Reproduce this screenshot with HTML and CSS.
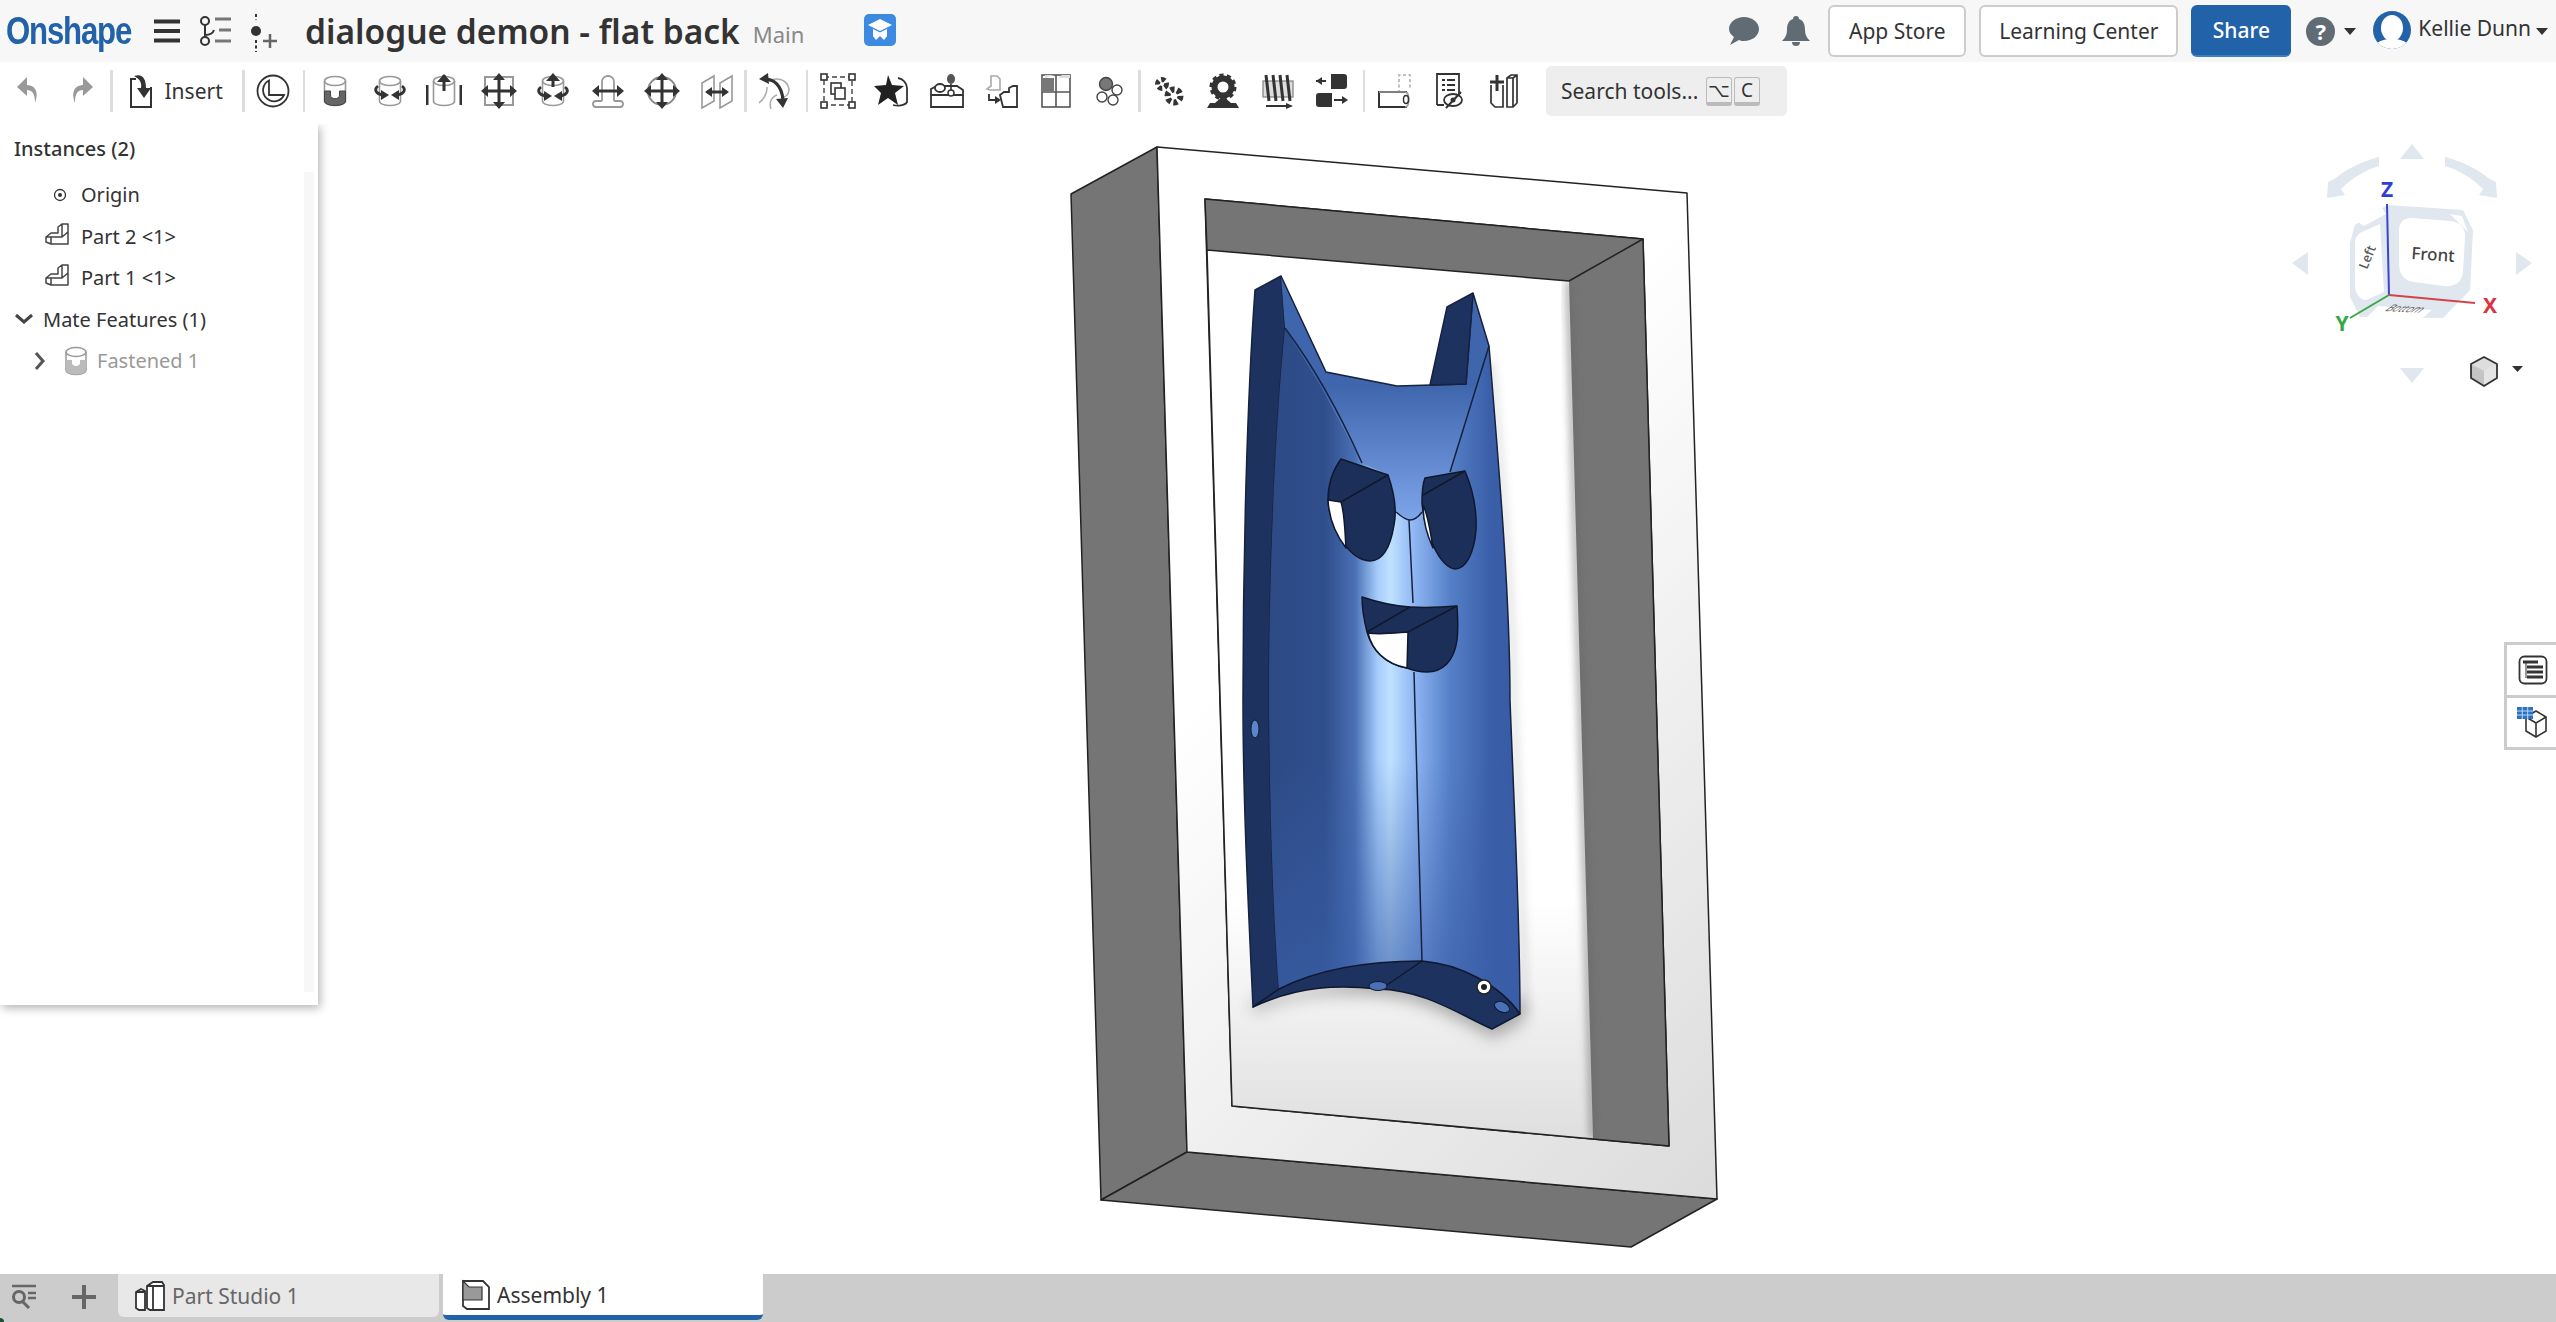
FILE: index.html
```html
<!DOCTYPE html>
<html lang="en">
<head>
<meta charset="utf-8">
<title>dialogue demon - flat back</title>
<link rel="stylesheet" href="styles.css">
</head>
<body>
<svg class="defs" width="0" height="0" aria-hidden="true">
  <defs>
    <symbol id="part" viewBox="0 0 24 24">
      <path d="M1 14l5-4h7V4l4-3h6v20H6l-5-2zM1 14h16V1M17 14l6-5M6 14v7" fill="none" stroke="#444" stroke-width="1.500" stroke-linejoin="round"/>
    </symbol>
    <symbol id="cyl" viewBox="0 0 36 36">
      <ellipse cx="18" cy="8" rx="10.500" ry="4.500" fill="none" stroke="#999" stroke-width="1.600"/>
      <path d="M7.500 8v20c0 6 21 6 21 0V8" fill="none" stroke="#999" stroke-width="1.600"/>
    </symbol>
  </defs>
</svg>

<header class="topbar">
  <div class="logo"><span class="logo-text">Onshape</span></div>
  <svg class="ic-burger" width="28" height="24" viewBox="0 0 28 24"><path d="M1 2.500h26M1 12h26M1 21.500h26" stroke="#333" stroke-width="4"/></svg>
  <svg class="ic-branch" width="34" height="32" viewBox="0 0 34 32"><circle cx="6" cy="6" r="4" fill="none" stroke="#333" stroke-width="2"/><circle cx="6" cy="26" r="4" fill="none" stroke="#333" stroke-width="2"/><path d="M6 10v12M6 20c5 0 8-2 9-5" fill="none" stroke="#333" stroke-width="2"/><path d="M16 4h16M20 15h12M16 26h16" stroke="#777" stroke-width="3"/></svg>
  <svg class="ic-insert" width="28" height="38" viewBox="0 0 28 38"><path d="M7 0v6M7 26v12" stroke="#333" stroke-width="2" stroke-dasharray="3 2.500"/><circle cx="7" cy="17" r="5" fill="#333"/><path d="M21 20v14M14 27h14" stroke="#666" stroke-width="2.500"/></svg>
  <h1 class="doc-title">dialogue demon - flat back</h1>
  <span class="doc-branch">Main</span>
  <svg class="ic-learn" width="32" height="32" viewBox="0 0 32 32"><rect width="32" height="32" rx="5" fill="#3d8be0"/><path d="M16 5L4 11l12 6 12-6z" fill="#fff"/><path d="M9 15v7l3 4 4-4 4 4 3-4v-7l-7 3.500z" fill="#fff"/></svg>
  <div class="top-right">
    <svg width="30" height="28" viewBox="0 0 30 28"><path d="M15 0c8 0 15 5 15 12s-7 12-15 12c-2 0-3 0-5-1L1 28l4-8C2 18 0 15 0 12 0 5 7 0 15 0z" fill="#616b74"/></svg>
    <svg class="ic-bell" width="28" height="30" viewBox="0 0 28 30"><path d="M14 0c2 0 3 1 3 3 5 2 6 6 6 11 0 5 2 8 5 11H0c3-3 5-6 5-11 0-5 1-9 6-11 0-2 1-3 3-3zM10 26h8c0 3-2 4-4 4s-4-1-4-4z" fill="#616b74"/></svg>
    <button class="btn btn-store">App Store</button>
    <button class="btn btn-learn">Learning Center</button>
    <button class="btn-share">Share</button>
    <span class="ic-help">?</span>
    <span class="caret caret-help"></span>
    <svg class="avatar" width="40" height="40" viewBox="0 0 40 40"><defs><clipPath id="av"><circle cx="20" cy="19" r="19"/></clipPath></defs><circle cx="20" cy="19" r="19" fill="#2262a8"/><g clip-path="url(#av)"><ellipse cx="20" cy="17" rx="11" ry="13" fill="#fff"/><path d="M2 40c0-9 8-12 18-12s18 3 18 12z" fill="#fff"/></g></svg>
    <span class="user">Kellie Dunn</span>
    <span class="caret caret-user"></span>
  </div>
</header>

<nav class="toolbar">
  <div class="tool"><svg width="24" height="32" viewBox="0 0 24 32"><path d="M11 2L1 12l10 9v-6c5 0 8 3 8 13 3-8 3-17-8-18z" fill="#999"/></svg></div>
  <div class="tool"><svg width="24" height="32" viewBox="0 0 24 32"><path d="M13 2l10 10-10 9v-6c-5 0-8 3-8 13-3-8-3-17 8-18z" fill="#999"/></svg></div>
  <div class="sep"></div>
  <div class="insert">
    <svg width="26" height="36" viewBox="0 0 26 36"><path d="M8 6H3v28h20V14" fill="none" stroke="#333" stroke-width="2"/><path d="M6 3c8-3 12 2 12 12h5l-7 10-7-10h4c1-5-1-9-7-12z" fill="#333"/></svg>
    <span class="insert-label">Insert</span>
  </div>
  <div class="sep"></div>
  <div class="tool"><svg width="34" height="34" viewBox="0 0 34 34"><circle cx="17" cy="17" r="15.500" fill="none" stroke="#333" stroke-width="1.800"/><path d="M13 6.500A11 11 0 1 0 28 21H13z" fill="none" stroke="#333" stroke-width="1.800"/></svg></div>
  <div class="sep sep-thin"></div>

  <div class="tool"><svg width="36" height="36" viewBox="0 0 36 36"><use href="#cyl"/><path d="M7.500 18h6v4c0 5 9 5 9 0v-4h6v10c0 6-21 6-21 0z" fill="#666" stroke="#444"/></svg></div>
  <div class="tool"><svg width="36" height="36" viewBox="0 0 36 36"><use href="#cyl"/><path d="M6 13c-4 3-3 7 4 9" fill="none" stroke="#333" stroke-width="2.800"/><path d="M9 17l8 5-8 5z" fill="#333"/><path d="M30 13c4 3 3 7-4 9" fill="none" stroke="#333" stroke-width="2.800"/><path d="M27 17l-8 5 8 5z" fill="#333"/></svg></div>
  <div class="tool"><svg width="36" height="36" viewBox="0 0 36 36"><use href="#cyl"/><path d="M1 12v20M35 12v20" stroke="#333" stroke-width="3"/><path d="M18 2v16" stroke="#333" stroke-width="3"/><path d="M18 1l7 8H11z" fill="#333"/></svg></div>
  <div class="tool"><svg width="36" height="36" viewBox="0 0 36 36"><rect x="4" y="4" width="28" height="28" fill="none" stroke="#999" stroke-width="2"/><path d="M18 4v28M4 18h28" stroke="#333" stroke-width="3"/><path d="M18 0l6 7H12zM18 36l6-7H12zM0 18l7-6v12zM36 18l-7-6v12z" fill="#333"/></svg></div>
  <div class="tool"><svg width="36" height="36" viewBox="0 0 36 36"><use href="#cyl"/><path d="M18 2v12" stroke="#333" stroke-width="3"/><path d="M18 0l7 8H11z" fill="#333"/><path d="M6 14c-4 3-3 7 4 9" fill="none" stroke="#333" stroke-width="2.800"/><path d="M9 18l8 5-8 5z" fill="#333"/><path d="M30 14c4 3 3 7-4 9" fill="none" stroke="#333" stroke-width="2.800"/><path d="M27 18l-8 5 8 5z" fill="#333"/></svg></div>
  <div class="tool"><svg width="36" height="36" viewBox="0 0 36 36"><path d="M12 28V9c0-8 12-8 12 0v19M12 28H6c-4 0-4 6 0 6h24c4 0 4-6 0-6h-6M6 34h24" fill="none" stroke="#999" stroke-width="1.800"/><path d="M4 18h28" stroke="#333" stroke-width="3"/><path d="M2 18l7-6v12zM34 18l-7-6v12z" fill="#333"/></svg></div>
  <div class="tool"><svg width="36" height="36" viewBox="0 0 36 36"><circle cx="18" cy="18" r="14" fill="none" stroke="#888" stroke-width="2"/><path d="M18 4v28M4 18h28" stroke="#333" stroke-width="3"/><path d="M18 0l6 7H12zM18 36l6-7H12zM0 18l7-6v12zM36 18l-7-6v12z" fill="#333"/></svg></div>
  <div class="tool"><svg width="36" height="36" viewBox="0 0 36 36"><path d="M3 10l12-7v25L3 35zM33 3L21 10v25l12-7z" fill="none" stroke="#999" stroke-width="1.600"/><path d="M8 19h20" stroke="#333" stroke-width="3"/><path d="M6 19l7-5v10zM30 19l-7-5v10z" fill="#333"/></svg></div>
  <div class="sep"></div>
  <div class="tool"><svg width="36" height="36" viewBox="0 0 36 36"><path d="M2 30c5-4 8-9 8-16M14 36c-2-6 0-12 6-14M12 8c8-4 18-2 20 8 0 5-3 8-6 8" fill="none" stroke="#aaa" stroke-width="1.500"/><path d="M7 6c10 0 17 6 19 20" fill="none" stroke="#333" stroke-width="3.200"/><path d="M2 6l9-6 1 11zM26 35l-7-9 12-1z" fill="#333"/></svg></div>
  <div class="sep sep-thin"></div>

  <div class="tool"><svg width="36" height="36" viewBox="0 0 36 36"><rect x="4" y="4" width="28" height="28" fill="none" stroke="#444" stroke-width="1.400" stroke-dasharray="5 3"/><g fill="#fff" stroke="#333" stroke-width="1.600"><rect x="1" y="1" width="6" height="6"/><rect x="29" y="1" width="6" height="6"/><rect x="1" y="29" width="6" height="6"/><rect x="29" y="29" width="6" height="6"/><rect x="11" y="10" width="10" height="11"/><rect x="15" y="15" width="10" height="11"/></g></svg></div>
  <div class="tool"><svg width="36" height="36" viewBox="0 0 36 36"><path d="M24 5a11 11 0 0 1 9 10v14c-2 4-10 4-14 3" fill="none" stroke="#333" stroke-width="1.800"/><path d="M14 2l4 10 12 1-9 7 3 12-10-7-10 7 3-12-7-7 12-1z" fill="#222"/></svg></div>
  <div class="tool"><svg width="36" height="36" viewBox="0 0 36 36"><path d="M2 16l6-3h20l6 4v17H2zM2 22h32" fill="none" stroke="#333" stroke-width="1.800"/><ellipse cx="11" cy="15" rx="5" ry="4" fill="#fff" stroke="#333" stroke-width="1.800"/><ellipse cx="22" cy="6" rx="4" ry="5" fill="#555"/><path d="M22 11v10" stroke="#333" stroke-width="1.600"/><circle cx="22" cy="20" r="3" fill="#fff" stroke="#333" stroke-width="1.500"/></svg></div>
  <div class="tool"><svg width="36" height="36" viewBox="0 0 36 36"><path d="M4 16l4-3V3h6l3 3v11H7z" fill="#fff" stroke="#aaa" stroke-width="1.600"/><path d="M17 22l4-3h5v-4l4-2h4v21H20z" fill="#fff" stroke="#333" stroke-width="1.800"/><path d="M6 21v6h8" fill="none" stroke="#333" stroke-width="1.800"/><path d="M18 27l-6-4v8z" fill="#333"/></svg></div>
  <div class="tool"><svg width="30" height="34" viewBox="0 0 30 34"><rect x="1" y="1" width="28" height="32" fill="#fff" stroke="#555" stroke-width="1.600"/><path d="M1 18h28M15 1v32" stroke="#555" stroke-width="1.600"/><path d="M1 4h12v14H1z" fill="#777"/><path d="M4 1h9l-9 3zM17 4l4-3h8v3" fill="#ddd"/></svg></div>
  <div class="tool"><svg width="30" height="30" viewBox="0 0 30 30"><circle cx="11" cy="8" r="6.500" fill="#777" stroke="#444" stroke-width="1.400"/><circle cx="22" cy="14" r="5" fill="#fff" stroke="#444" stroke-width="1.400"/><circle cx="7" cy="21" r="5" fill="#fff" stroke="#444" stroke-width="1.400"/><circle cx="18" cy="24" r="5" fill="#fff" stroke="#444" stroke-width="1.400"/></svg></div>
  <div class="sep"></div>
  <div class="tool"><svg width="36" height="36" viewBox="0 0 36 36"><g fill="none" stroke="#333" stroke-dasharray="4 2.600"><circle cx="11" cy="11" r="4.500" stroke-width="5"/><circle cx="23" cy="23" r="6.500" stroke-width="6"/></g></svg></div>
  <div class="tool"><svg width="36" height="36" viewBox="0 0 36 36"><circle cx="18" cy="14" r="8.500" fill="none" stroke="#333" stroke-width="6"/><circle cx="18" cy="14" r="11.500" fill="none" stroke="#333" stroke-width="4" stroke-dasharray="4 3.200"/><path d="M2 35l3-5h26l3 5zM10 30l8-7 8 7z" fill="#333"/></svg></div>
  <div class="tool"><svg width="36" height="36" viewBox="0 0 36 36"><rect x="3" y="8" width="30" height="16" fill="#ddd" stroke="#888" stroke-width="1.300"/><path d="M6 2l3 26M13 2l3 26M20 2l3 26M27 2l3 26" stroke="#333" stroke-width="3"/><path d="M6 33h22" stroke="#333" stroke-width="2"/><path d="M33 33l-7-3v6z" fill="#333"/></svg></div>
  <div class="tool"><svg width="36" height="36" viewBox="0 0 36 36"><path d="M17 1h13c2 0 3 1 3 3v9c0 2-1 3-3 3H17z" fill="#333"/><path d="M2 8h10" stroke="#333" stroke-width="2"/><path d="M2 8l6-4v8z" fill="#333"/><path d="M5 20h13v14H5c-2 0-3-1-3-3v-8c0-2 1-3 3-3z" fill="#333"/><path d="M20 27h12" stroke="#333" stroke-width="2"/><path d="M34 27l-6-4v8z" fill="#333"/></svg></div>
  <div class="sep sep-thin"></div>
  <div class="tool"><svg width="36" height="36" viewBox="0 0 36 36"><path d="M22 20V2h11v14" fill="none" stroke="#aaa" stroke-width="1.500" stroke-dasharray="3 2.500"/><path d="M30 34H2V19h28" fill="none" stroke="#333" stroke-width="2"/><path d="M2 19h26c5 0 5 15 0 15" fill="none" stroke="#999" stroke-width="1.600"/><ellipse cx="29" cy="26.500" rx="2.500" ry="4" fill="none" stroke="#333" stroke-width="1.500"/></svg></div>
  <div class="tool"><svg width="32" height="36" viewBox="0 0 32 36"><path d="M4 32V1h22v20M4 32h7" fill="none" stroke="#333" stroke-width="1.800"/><path d="M9 7h3M14 7h8M9 12h3M14 12h8M9 17h3M14 17h8" stroke="#333" stroke-width="1.800"/><ellipse cx="20" cy="27" rx="9" ry="6" fill="#fff" stroke="#333" stroke-width="1.800"/><circle cx="20" cy="27" r="2.500" fill="#333"/><path d="M13 35L28 19" stroke="#333" stroke-width="2"/></svg></div>
  <div class="tool"><svg width="30" height="36" viewBox="0 0 30 36"><path d="M18 5l4-3h6v28l-4 4h-6zM18 5h6v29M24 5l4-3" fill="#fff" stroke="#333" stroke-width="1.700"/><path d="M2 12v18l4 4h8V12" fill="none" stroke="#333" stroke-width="1.700"/><path d="M8 2v16M1 9h14" stroke="#333" stroke-width="3"/></svg></div>
  <div class="search">
    <span class="search-label">Search tools...</span>
    <kbd class="key">⌥</kbd>
    <kbd class="key">C</kbd>
  </div>
</nav>

<main class="viewport">
  <svg class="scene" width="2556" height="1150" viewBox="0 124 2556 1150">
    <defs>
      <linearGradient id="ring" gradientUnits="userSpaceOnUse" x1="1200" y1="700" x2="1700" y2="1200"><stop offset="0" stop-color="#fff"/><stop offset="1" stop-color="#dcdcdc"/></linearGradient>
      <linearGradient id="plate" gradientUnits="userSpaceOnUse" x1="0" y1="900" x2="0" y2="1130"><stop offset="0" stop-color="#fff"/><stop offset="1" stop-color="#e0e0e0"/></linearGradient>
      <linearGradient id="face" gradientUnits="userSpaceOnUse" x1="1270" y1="0" x2="1520" y2="0">
        <stop offset="0" stop-color="#2d4a85"/><stop offset=".22" stop-color="#2f4e8c"/><stop offset=".34" stop-color="#4a70b5"/><stop offset=".43" stop-color="#a5cbfb"/><stop offset=".48" stop-color="#bfe2ff"/><stop offset=".58" stop-color="#8eb5f3"/><stop offset=".72" stop-color="#5580c8"/><stop offset=".88" stop-color="#3a5fa8"/><stop offset="1" stop-color="#375aa3"/>
      </linearGradient>
      <linearGradient id="vee" gradientUnits="userSpaceOnUse" x1="0" y1="385" x2="0" y2="520"><stop offset="0" stop-color="#3f66ad"/><stop offset="1" stop-color="#7ea5ea"/></linearGradient>
      <linearGradient id="faceBot" gradientUnits="userSpaceOnUse" x1="0" y1="760" x2="0" y2="980"><stop offset="0" stop-color="#3a5fa8" stop-opacity="0"/><stop offset="1" stop-color="#3a5fa8" stop-opacity=".65"/></linearGradient>
      <filter id="blur8" x="-30%" y="-30%" width="160%" height="160%"><feGaussianBlur stdDeviation="8"/></filter>
      <filter id="blur4" x="-30%" y="-30%" width="160%" height="160%"><feGaussianBlur stdDeviation="4"/></filter>
      <clipPath id="plateClip"><path d="M1207 250L1569 281 1593 1139 1232 1106z"/></clipPath>
      <clipPath id="wallClip"><path d="M1207 250L1569 281 1643 239 1669 1146 1593 1139 1232 1106z"/></clipPath>
      <clipPath id="faceClip"><path d="M1281 276L1326 372 1397 386 1466 384 1473 293 1489 346C1500 480 1510 600 1510 700C1515 830 1520 920 1520 1014C1500 985 1460 964 1422 961C1370 961 1320 968 1279 989C1274 920 1270 830 1269 700C1269 560 1276 420 1285 328z"/></clipPath>
    </defs>

    <g stroke="#222" stroke-width="1.500" stroke-linejoin="round">
      <path d="M1071 194L1157 147 1187 1152 1101 1200z" fill="#757575"/>
      <path d="M1101 1200L1187 1152 1717 1199 1631 1247z" fill="#757575"/>
      <path d="M1157 147L1687 193 1717 1199 1187 1152zM1205 199L1643 239 1669 1146 1232 1106z" fill="url(#ring)" fill-rule="evenodd"/>
      <path d="M1207 250L1569 281 1593 1139 1232 1106z" fill="url(#plate)" stroke="none"/>
      <path d="M1205 199L1643 239 1569 281 1207 250z" fill="#757575" stroke="none"/>
      <path d="M1643 239L1569 281 1593 1139 1669 1146z" fill="#757575" stroke="none"/>
    </g>
    <g clip-path="url(#wallClip)">
      <path d="M1569 281L1593 1139" stroke="#666" stroke-width="4" filter="url(#blur4)"/>
    </g>
    <g clip-path="url(#plateClip)">
      <path d="M1253 1012C1300 992 1340 994 1378 996C1425 998 1460 1022 1494 1038L1524 1022L1524 1000L1378 975L1253 1000z" fill="#555" opacity=".45" filter="url(#blur8)"/>
      <path d="M1492 360C1504 500 1514 620 1514 700C1519 830 1524 920 1525 1014" fill="none" stroke="#999" stroke-width="4" opacity=".45" filter="url(#blur4)"/>
    </g>
    <path d="M1205 199L1643 239 1569 281 1207 250zM1207 250L1232 1106 1593 1139 1669 1146 1643 239" fill="none" stroke="#222" stroke-width="1.500" stroke-linejoin="round"/>

    <path d="M1255 290L1281 276 1285 328C1276 420 1269 560 1269 700C1270 830 1274 920 1279 989L1253 1007C1248 900 1243 800 1243 700C1243 560 1247 400 1255 290z" fill="#1e3260" stroke="#16223f" stroke-width="1.500" stroke-linejoin="round"/>
    <g clip-path="url(#faceClip)">
      <rect x="1260" y="270" width="270" height="760" fill="url(#face)"/>
      <path d="M1281 276L1326 372 1397 386 1466 384 1473 293 1489 346 1450 472 1425 478 1422 512 1410 520 1396 512 1388 475 1362 463 1320 385 1285 328z" fill="url(#vee)"/>
      <rect x="1260" y="760" width="270" height="270" fill="url(#faceBot)"/>
    </g>
    <g fill="none" stroke="#16223f" stroke-width="1.500">
      <path d="M1281 276L1326 372 1397 386 1466 384 1473 293 1489 346C1500 480 1510 600 1510 700C1515 830 1520 920 1520 1014"/>
      <path d="M1285 328C1320 375 1345 425 1362 463"/>
      <path d="M1489 346L1450 472"/>
      <path d="M1396 512C1403 518 1407 520 1410 520C1414 520 1419 516 1422 512"/>
      <path d="M1409 520L1413 603"/>
      <path d="M1414 672L1422 961"/>
    </g>
    <path d="M1447 307L1473 293 1466 384 1430 385z" fill="#1e3260" stroke="#16223f" stroke-width="1.500" stroke-linejoin="round"/>

    <g stroke="#10182e" stroke-width="1.500" stroke-linejoin="round">
      <path d="M1341 459L1388 475C1395 495 1397 510 1394 525C1390 550 1382 561 1370 561C1350 560 1330 530 1328 500C1328 485 1333 470 1341 459z" fill="#1c2f58"/>
      <path d="M1328 500L1341 502C1345 515 1345 535 1346 548C1336 535 1329 518 1328 500z" fill="#fff"/>
      <path d="M1341 502L1388 475" fill="none"/>
      <path d="M1425 478L1465 471C1473 490 1477 510 1476 530C1474 555 1465 569 1455 569C1440 567 1425 535 1422 503C1422 495 1422 485 1425 478z" fill="#1c2f58"/>
      <path d="M1423 505C1428 515 1431 535 1433 548C1427 535 1423 520 1423 505z" fill="#fff"/>
      <path d="M1423 495L1465 471" fill="none"/>
      <path d="M1362 597C1380 603 1395 606 1410 607C1430 608 1445 607 1457 606C1458 620 1458 632 1457 640C1454 662 1442 672 1427 672C1420 672 1412 670 1407 668C1385 664 1372 650 1367 632C1364 620 1362 608 1362 597z" fill="#1c2f58"/>
      <path d="M1368 633C1380 635 1395 633 1408 632L1407 668C1385 664 1372 650 1368 633z" fill="#fff"/>
      <path d="M1367 632L1410 607M1408 632L1457 606" fill="none"/>
    </g>

    <path d="M1279 989C1320 968 1370 961 1422 961C1460 964 1500 985 1520 1014L1492 1029C1460 1015 1425 990 1378 989C1340 985 1300 985 1253 1007z" fill="#1e3260" stroke="#10182e" stroke-width="1.500" stroke-linejoin="round"/>
    <path d="M1422 961L1384 987" stroke="#10182e" stroke-width="1.500"/>
    <ellipse cx="1378" cy="986" rx="9" ry="4.500" fill="#4a70b5" stroke="#10182e"/>
    <ellipse cx="1502" cy="1007" rx="8" ry="5" transform="rotate(25 1502 1007)" fill="#4a70b5" stroke="#10182e"/>
    <ellipse cx="1255" cy="729" rx="4" ry="9" fill="#5d85cc" stroke="#10182e"/>
    <circle cx="1484" cy="987" r="7" fill="#fff" stroke="#222" stroke-width="1.500"/>
    <circle cx="1484" cy="987" r="3" fill="#222"/>
  </svg>

  <aside class="panel">
    <div class="scroll-track"></div>
    <h2 class="panel-title">Instances (2)</h2>
    <ul class="tree">
      <li class="row row-child"><svg class="row-ic" width="14" height="14" viewBox="0 0 14 14"><circle cx="7" cy="7" r="5.500" fill="none" stroke="#333" stroke-width="1.300"/><circle cx="7" cy="7" r="2" fill="#333"/></svg><span>Origin</span></li>
      <li class="row row-child"><svg class="row-part" width="24" height="24"><use href="#part"/></svg><span>Part 2 &lt;1&gt;</span></li>
      <li class="row row-child"><svg class="row-part" width="24" height="24"><use href="#part"/></svg><span>Part 1 &lt;1&gt;</span></li>
      <li class="row row-group"><svg class="chev" width="20" height="12" viewBox="0 0 20 12"><path d="M2 2l8 7 8-7" fill="none" stroke="#444" stroke-width="3"/></svg><span>Mate Features (1)</span></li>
      <li class="row row-mate"><svg class="chev-r" width="12" height="20" viewBox="0 0 12 20"><path d="M2 2l7 8-7 8" fill="none" stroke="#555" stroke-width="3"/></svg><svg class="mate-ic" width="24" height="30" viewBox="0 0 24 30"><ellipse cx="12" cy="6" rx="10" ry="4.500" fill="none" stroke="#999" stroke-width="1.500"/><path d="M2 6v18c0 6 20 6 20 0V6" fill="none" stroke="#999" stroke-width="1.500"/><path d="M2 14h6v3c0 4 8 4 8 0v-3h6v10c0 6-20 6-20 0z" fill="#bbb"/></svg><span>Fastened 1</span></li>
    </ul>
  </aside>

  <svg class="gizmo" width="296" height="270" viewBox="2260 130 296 270">
    <g fill="#e1e7ee">
      <path d="M2412 144l12 15h-24zM2412 383l-12-15h24zM2292 263l16-11v23zM2532 263l-16-11v23z"/>
      <path d="M2379 157C2360 162 2345 170 2336 178L2328 182 2327 198 2345 195 2341 189C2352 178 2365 170 2379 166z"/>
      <path d="M2445 157C2464 162 2479 170 2488 178L2496 182 2497 198 2479 195 2483 189C2472 178 2459 170 2445 166z"/>
      <path d="M2355 225L2387 205 2463 210 2473 230 2470 290 2443 318 2360 317 2350 297 2350 243z"/>
    </g>
    <g fill="#fff">
      <path d="M2412 218L2450 221C2460 222 2466 228 2465 238L2463 272C2462 283 2454 287 2444 286L2414 282C2404 281 2399 274 2399 264V232C2399 222 2403 218 2412 218z"/>
      <path d="M2362 232L2380 224 2384 292 2366 300C2359 300 2355 292 2355 285V243C2355 237 2358 234 2362 232z"/>
      <path d="M2378 306L2432 310 2420 320 2366 318z"/>
      <path d="M2358 222L2382 208 2386 214 2364 226zM2450 214L2468 232 2462 216z"/>
    </g>
    <text class="giz-front" transform="translate(2411 259) rotate(4)">Front</text>
    <text class="giz-left" transform="translate(2367 270) rotate(-68)">Left</text>
    <text class="giz-bottom" transform="translate(2384 311) rotate(3) skewX(-50)">Bottom</text>
    <path d="M2389 295L2387 204" stroke="#3a44cf" stroke-width="2"/>
    <path d="M2389 295L2475 303" stroke="#d0454b" stroke-width="2"/>
    <path d="M2389 295L2350 318" stroke="#3aa845" stroke-width="2"/>
    <text class="axis axis-z" x="2387" y="197">Z</text>
    <text class="axis axis-x" x="2490" y="313">X</text>
    <text class="axis axis-y" x="2342" y="331">Y</text>
    <path d="M2471 364l13-7 13 7v14l-13 8-13-8z" fill="#ddd"/>
    <path d="M2471 364l13 7v15l-13-8z" fill="#c4c4c4"/>
    <path d="M2484 371l13-7v14l-13 8z" fill="#e4e4e4"/>
    <path d="M2471 364l13-7 13 7v14l-13 8-13-8z" fill="none" stroke="#333" stroke-width="1.800" stroke-linejoin="round"/>
    <path d="M2512 366h11l-5.500 6z" fill="#333"/>
  </svg>

  <div class="side-tabs">
    <div class="side-tab"><svg width="30" height="30" viewBox="0 0 30 30"><rect x="1.500" y="1.500" width="27" height="27" rx="5" fill="none" stroke="#333" stroke-width="1.800"/><path d="M5 7h15M9 12h16M9 17h16M9 22h16" stroke="#333" stroke-width="3"/><path d="M8 8v15" stroke="#333"/></svg></div>
    <div class="side-tab"><svg width="32" height="32" viewBox="0 0 32 32"><path d="M20 6l10 6v14l-10 6-10-6V12z" transform="translate(-1 -2)" fill="none" stroke="#333" stroke-width="1.600" stroke-linejoin="round"/><path d="M9 10l10 6 10-6M19 16v14" fill="none" stroke="#333" stroke-width="1.600"/><rect x="0" y="0" width="16" height="12" fill="#2a72c4"/><path d="M0 4h16M0 8h16M5.300 0v12M10.700 0v12" stroke="#bcd7f3" stroke-width="1"/></svg></div>
  </div>
</main>

<footer class="tabbar">
  <span class="corner"></span>
  <svg class="ic-filter" width="28" height="26" viewBox="0 0 28 26"><path d="M2 2h24" stroke="#666" stroke-width="2.500"/><circle cx="9" cy="13" r="5.500" fill="none" stroke="#666" stroke-width="3"/><path d="M13 18l6 6" stroke="#666" stroke-width="3"/><path d="M18 9h8M18 14h8" stroke="#666" stroke-width="2.500"/></svg>
  <svg class="ic-plus" width="24" height="24" viewBox="0 0 24 24"><path d="M12 0v24M0 12h24" stroke="#666" stroke-width="4"/></svg>
  <div class="tab tab-studio">
    <svg width="32" height="32" viewBox="0 0 32 32"><path d="M2 12l5-3 4 2v19H5l-3-2zM2 12h9M13 6l6-4h9l2 3v25H16l-3-2zM13 6h6M19 6v24M19 6h11" fill="#fff" stroke="#333" stroke-width="1.800"/></svg>
    <span>Part Studio 1</span>
  </div>
  <div class="tab tab-assembly">
    <svg width="30" height="32" viewBox="0 0 30 32"><path d="M2 2h20l6 6v22H6l-4-3z" fill="#fff" stroke="#333" stroke-width="1.800"/><path d="M2 2v19h19V8H8z" fill="#999" stroke="#333" stroke-width="1.200"/></svg>
    <span>Assembly 1</span>
  </div>
</footer>
</body>
</html>
```

FILE: styles.css
```css
* { box-sizing: border-box; }
html, body { margin: 0; padding: 0; }
body {
  width: 2556px;
  height: 1322px;
  overflow: hidden;
  display: flex;
  flex-direction: column;
  font-family: "Noto Sans", "Open Sans", sans-serif;
  color: #333;
  background: #fff;
}
.defs { position: absolute; }
svg { display: block; flex: none; }

/* top bar */
.topbar {
  height: 62px;
  flex: none;
  display: flex;
  align-items: center;
  background: #f7f7f7;
  padding-left: 6px;
}
.logo { width: 147px; overflow: visible; }
.logo-text {
  display: inline-block;
  font: 700 39px "Liberation Sans", sans-serif;
  color: #2262a8;
  letter-spacing: -1.500px;
  transform: scaleX(.8);
  transform-origin: left center;
}
.ic-branch { margin-left: 18px; }
.ic-insert { margin-left: 16px; margin-top: 4px; }
.doc-title { margin: 0 0 0 28px; font-size: 33.500px; font-weight: 600; color: #333; white-space: nowrap; }
.doc-branch { margin-left: 13px; font-size: 22px; color: #888; padding-top: 5px; }
.ic-learn { margin-left: 60px; margin-top: -2px; }
.top-right { margin-left: auto; display: flex; align-items: center; height: 100%; padding-right: 8px; }
.ic-bell { margin-left: 23px; }
.btn {
  height: 52px;
  margin-left: 18px;
  background: #fff;
  border: 2px solid #ccc;
  border-radius: 6px;
  font: 400 21px "Noto Sans", sans-serif;
  color: #333;
  padding: 0;
}
.btn-store { width: 138px; }
.btn-learn { width: 199px; margin-left: 13px; }
.btn-share {
  width: 100px;
  height: 52px;
  margin-left: 13px;
  background: #2262a8;
  border: 0;
  border-bottom: 2px solid #3d7fc4;
  border-radius: 6px;
  font: 500 21px "Noto Sans", sans-serif;
  color: #fff;
}
.ic-help {
  margin-left: 15px;
  width: 29px;
  height: 29px;
  border-radius: 50%;
  background: #616b74;
  color: #fff;
  font-size: 22px;
  line-height: 29px;
  font-weight: 700;
  text-align: center;
  flex: none;
}
.caret { width: 0; height: 0; border-left: 6px solid transparent; border-right: 6px solid transparent; border-top: 7px solid #333; flex: none; }
.caret-help { margin-left: 9px; }
.avatar { margin-left: 16px; }
.user { margin-left: 6px; font-size: 21px; color: #333; padding-bottom: 6px; white-space: nowrap; }
.caret-user { margin-left: 5px; }

/* toolbar */
.toolbar { height: 62px; flex: none; display: flex; align-items: center; background: #fff; padding-bottom: 4px; }
.tool { width: 54.500px; height: 42px; display: flex; align-items: center; justify-content: center; flex: none; }
.sep { width: 3px; height: 42px; background: #ddd; flex: none; margin-right: 1px; }
.sep-thin { width: 2px; margin: 0 3px; }
.toolbar > .tool:first-child { width: 55px; }
.insert { width: 128px; display: flex; align-items: center; padding-left: 14px; gap: 11px; flex: none; }
.insert-label { font-size: 21px; color: #333; }
.search {
  margin-left: 15px;
  width: 241px;
  height: 50px;
  background: #eee;
  border-radius: 5px;
  display: flex;
  align-items: center;
  padding-left: 15px;
  flex: none;
}
.search-label { font-size: 21px; color: #333; width: 145px; white-space: nowrap; }
.key {
  width: 26px;
  height: 29px;
  margin-right: 2px;
  background: #eee;
  border: 1px solid #bbb;
  border-bottom: 4px solid #bbb;
  border-radius: 3px;
  font: 400 19px "Noto Sans", "DejaVu Sans", sans-serif;
  display: flex;
  align-items: center;
  justify-content: center;
}

/* viewport */
.viewport { flex: 1; position: relative; overflow: hidden; background: #fff; }
.scene { position: absolute; left: 0; top: 0; }
.panel {
  position: absolute;
  left: 0;
  top: 0;
  width: 318px;
  height: 881px;
  background: #fff;
  box-shadow: 2px 3px 9px rgba(0,0,0,.3);
  padding: 10px 0 0 14px;
}
.scroll-track { position: absolute; left: 304px; top: 48px; width: 10px; height: 820px; background: #f7f7f7; }
.panel-title { margin: 0 0 10px; height: 30px; line-height: 30px; font-size: 20px; font-weight: 500; color: #333; }
.tree { list-style: none; margin: 0; padding: 0; }
.row { height: 41.500px; display: flex; align-items: center; font-size: 20px; color: #333; white-space: nowrap; }
.row-child { position: relative; padding-left: 67px; }
.row-ic { position: absolute; left: 39px; top: 14px; }
.row-part { position: absolute; left: 31px; top: 7px; }
.chev { margin-right: 9px; }
.row-mate { color: #999; padding-left: 20px; }
.mate-ic { margin-left: 18px; margin-right: 9px; }

.gizmo { position: absolute; left: 2260px; top: 6px; }
.giz-front { font: 500 17px "Noto Sans", sans-serif; fill: #444; }
.giz-left { font: 500 13px "Noto Sans", sans-serif; fill: #555; }
.giz-bottom { font: 400 10px "Noto Sans", sans-serif; fill: #666; }
.axis { font: 700 21px "Noto Sans", sans-serif; text-anchor: middle; }
.axis-z { fill: #2f3fd6; }
.axis-x { fill: #d93540; }
.axis-y { fill: #35a843; }

.side-tabs {
  position: absolute;
  right: 0;
  top: 518px;
  width: 52px;
  border: 3px solid #ccc;
  border-right: 0;
  background: #fff;
}
.side-tab { height: 50px; display: flex; align-items: center; justify-content: center; padding-left: 3px; }
.side-tab + .side-tab { border-top: 3px solid #ccc; height: 52px; }

/* tabs */
.tabbar { position: relative; height: 48px; flex: none; background: #ccc; display: flex; align-items: flex-start; padding-left: 10px; }
.corner { position: absolute; left: 0; bottom: 0; width: 4px; height: 4px; background: #1c4f33; border-top-right-radius: 4px; }
.ic-filter { margin-top: 10px; }
.ic-plus { margin: 11px 0 0 34px; }
.tab {
  height: 43px;
  display: flex;
  align-items: center;
  gap: 6px;
  font-size: 21px;
  white-space: nowrap;
  border-radius: 0 0 6px 6px;
  padding-left: 16px;
  flex: none;
}
.tab-studio { width: 321px; margin-left: 22px; background: #e8e8e8; color: #666; }
.tab-assembly { width: 320px; margin-left: 4px; background: #fff; color: #333; border-bottom: 5px solid #2262a8; height: 46px; padding-left: 18px; }
```
